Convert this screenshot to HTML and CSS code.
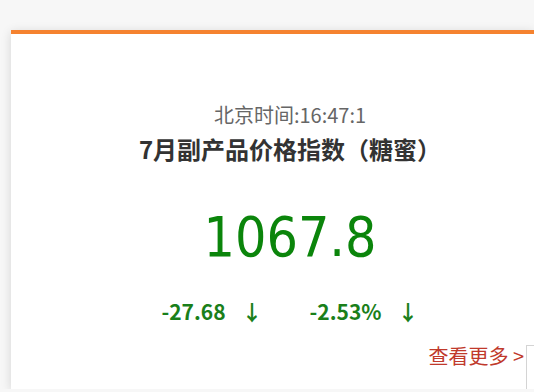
FILE: index.html
```html
<!DOCTYPE html>
<html lang="zh-CN">
<head>
    <meta charset="UTF-8">
    <title>副产品价格指数</title>
    <link rel="stylesheet" href="styles.css">
</head>
<body>
    <div class="index-card">
        <div class="time">北京时间:16:47:1</div>
        <h2 class="title">7月副产品价格指数（糖蜜）</h2>
        <div class="value">1067.8</div>
        <div class="changes">
            <span class="change">-27.68<span class="arrow">↓</span></span>
            <span class="change">-2.53%<span class="arrow">↓</span></span>
        </div>
        <a class="more" href="#">查看更多 &gt;</a>
        <div class="side-box"></div>
    </div>
</body>
</html>
```

FILE: styles.css
```css
html {
    overflow: hidden;
}
body {
    margin: 0;
    padding: 30px 0 0 11px;
    background: #f7f7f7;
    font-family: "Noto Sans CJK SC", "Noto Sans", sans-serif;
}
.index-card {
    position: relative;
    width: 523px;
    height: 359px;
    box-sizing: border-box;
    padding: 68px 0 0 35px;
    background: #fff;
    border-top: 4px solid #f5822f;
    box-shadow: 0 2px 10px rgba(0, 0, 0, 0.14);
    display: flex;
    flex-direction: column;
    align-items: center;
}
.time {
    color: #666;
    font-size: 20px;
    line-height: 26px;
}
.title {
    margin: 5px 0 0;
    color: #333;
    font-size: 24px;
    line-height: 32px;
    font-weight: 700;
}
.value {
    margin-top: 39px;
    color: #0b850b;
    font-family: "DejaVu Sans Condensed", "DejaVu Sans", sans-serif;
    font-stretch: condensed;
    font-size: 55px;
    line-height: 66px;
}
.changes {
    margin-top: 27px;
    display: flex;
    gap: 47px;
    color: #1a7f1a;
    font-size: 21px;
    line-height: 28px;
    font-weight: 700;
}
.arrow {
    margin-left: 16px;
}
.more {
    align-self: flex-end;
    margin: 18px 10px 0 0;
    color: #c0392b;
    font-size: 20px;
    line-height: 26px;
    text-decoration: none;
}
.side-box {
    position: absolute;
    right: 0;
    top: 311px;
    bottom: 0;
    width: 7px;
    border-left: 1px solid #d4d4d4;
    border-top: 1px solid #d4d4d4;
}
```
